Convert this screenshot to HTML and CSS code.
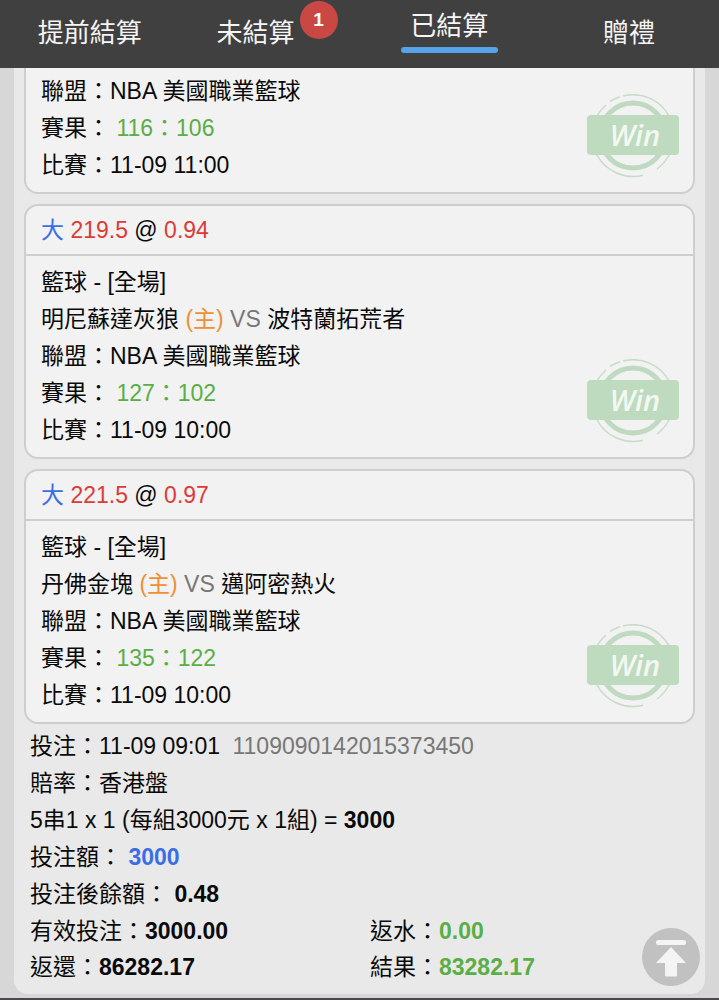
FILE: index.html
```html
<!DOCTYPE html>
<html lang="zh-Hant">
<head>
  <meta charset="UTF-8">
  <meta name="viewport" content="width=device-width, initial-scale=1.0">
  <title>已結算</title>
  <link rel="stylesheet" href="styles.css">
</head>
<body>

  <!-- stamp shared by all winning bets -->
  <svg class="defs" aria-hidden="true">
    <symbol id="win-stamp" viewBox="0 0 92 84">
      <g fill="none" stroke="#c8dbc9" stroke-width="1.5">
        <path d="M36 2A41 41 0 0 1 82 22"/>
        <path d="M82 61A41 41 0 0 1 70 75"/>
        <path d="M56 81.3A41 41 0 0 1 10 61"/>
        <path d="M10 22A41 41 0 0 1 19 11"/>
        <path d="M23 7.5A41 41 0 0 1 33 2.7"/>
      </g>
      <circle cx="46" cy="41.5" r="32.5" fill="none" stroke="#bfdac0" stroke-width="5"/>
      <rect y="21" width="92" height="40" rx="4" fill="#bedbbf"/>
    </symbol>
  </svg>

  <nav class="tabs">
    <a href="#early">提前結算</a>
    <a href="#open" class="has-badge">未結算<span class="badge">1</span></a>
    <a href="#settled" class="active">已結算</a>
    <a href="#gift">贈禮</a>
  </nav>

  <main class="panel">
    <section class="bet bet-continued">
      <div class="bet-body">
        <div>
          <p>聯盟：NBA 美國職業籃球</p>
          <p>賽果： <span class="green">116：106</span></p>
          <p>比賽：11-09 11:00</p>
        </div>
        <svg class="stamp" viewBox="0 0 92 84"><use href="#win-stamp"/><text x="48" y="52" text-anchor="middle">Win</text></svg>
      </div>
    </section>

    <section class="bet">
      <h2 class="bet-head"><span class="blue">大</span> <span class="red">219.5</span> @ <span class="red">0.94</span></h2>
      <div class="bet-body">
        <div>
          <p>籃球 - [全場]</p>
          <p>明尼蘇達灰狼 <span class="orange">(主)</span> <span class="gray">VS</span> 波特蘭拓荒者</p>
          <p>聯盟：NBA 美國職業籃球</p>
          <p>賽果： <span class="green">127：102</span></p>
          <p>比賽：11-09 10:00</p>
        </div>
        <svg class="stamp" viewBox="0 0 92 84"><use href="#win-stamp"/><text x="48" y="52" text-anchor="middle">Win</text></svg>
      </div>
    </section>

    <section class="bet">
      <h2 class="bet-head"><span class="blue">大</span> <span class="red">221.5</span> @ <span class="red">0.97</span></h2>
      <div class="bet-body">
        <div>
          <p>籃球 - [全場]</p>
          <p>丹佛金塊 <span class="orange">(主)</span> <span class="gray">VS</span> 邁阿密熱火</p>
          <p>聯盟：NBA 美國職業籃球</p>
          <p>賽果： <span class="green">135：122</span></p>
          <p>比賽：11-09 10:00</p>
        </div>
        <svg class="stamp" viewBox="0 0 92 84"><use href="#win-stamp"/><text x="48" y="52" text-anchor="middle">Win</text></svg>
      </div>
    </section>

    <section class="summary">
      <p>投注：11-09 09:01 <span class="gray ticket">1109090142015373450</span></p>
      <p>賠率：香港盤</p>
      <p>5串1 x 1 (每組3000元 x 1組) = <b>3000</b></p>
      <p>投注額： <b class="blue">3000</b></p>
      <p>投注後餘額： <b>0.48</b></p>
      <div class="totals">
        <p>有效投注：<b>3000.00</b></p>
        <p>返水：<b class="green">0.00</b></p>
        <p>返還：<b>86282.17</b></p>
        <p>結果：<b class="green">83282.17</b></p>
      </div>
    </section>
  </main>

  <button class="to-top" type="button" aria-label="回到頂部" onclick="window.scrollTo(0, 0)">
    <svg viewBox="0 0 58 58" fill="#f4f4f4">
      <rect x="14" y="12" width="30" height="5" rx="2"/>
      <path d="M29 19L44 35H35V47.500Q35 48.500 34 48.500H24Q23 48.500 23 47.500V35H14Z"/>
    </svg>
  </button>

</body>
</html>
```
FILE: styles.css
```css
* { margin: 0; padding: 0; box-sizing: border-box; }
body { font-family: "Liberation Sans", Arial, "Noto Sans CJK TC", sans-serif; font-size: 23px; line-height: 37px; color: #0a0a0a; background: #d7d7d7; border-bottom: 2px solid #4a484a; }
a { color: inherit; text-decoration: none; }

.defs { position: absolute; width: 0; height: 0; }

.tabs { display: grid; grid-template-columns: repeat(4, 1fr); height: 68px; background: #404040; color: #f5f5f5; font-size: 26px; line-height: 30px; }
.tabs a { position: relative; display: flex; flex-direction: column; justify-content: center; align-items: center; padding-bottom: 2px; }
.tabs .active { padding-bottom: 4px; }
.tabs .active::after { content: ""; width: 97px; height: 6px; margin-top: 6px; border-radius: 3px; background: #55a3ea; }
.tabs .has-badge { padding-right: 28px; }
.badge { position: absolute; top: 1px; right: 22px; width: 38px; height: 38px; border-radius: 50%; background: #c94843; color: #fff; font-size: 19px; font-weight: bold; line-height: 38px; text-align: center; }

.panel { margin: 0 14px 4px; padding: 0 10px 9px; background: #e9e9e9; border-radius: 0 0 14px 14px; }

.bet { margin-bottom: 10px; background: #f2f2f2; border: 2px solid #cecece; border-radius: 14px; }
.bet-continued { border-top: none; border-radius: 0 0 14px 14px; }
.bet-head { padding: 0 15px; font-size: 23px; font-weight: normal; line-height: 48px; border-bottom: 2px solid #cecece; }
.bet-body { display: flex; justify-content: space-between; align-items: flex-end; padding: 8px 14px 8px 15px; }
.bet-continued .bet-body { padding-top: 5px; }

.stamp { flex: none; width: 92px; height: 84px; margin-bottom: 6px; }
.stamp text { font-family: "Open Sans", sans-serif; font-size: 29px; font-weight: 600; font-style: italic; fill: #f3f8f3; }

.summary { margin-top: -6px; padding: 0 5px 0 6px; }
.ticket { margin-left: 6px; }
.totals { display: grid; grid-template-columns: 1fr 1fr; column-gap: 20px; line-height: 36px; }

.blue { color: #3b6ee6; }
.red { color: #dc3b36; }
.green { color: #5aae46; }
.orange { color: #ee8f33; }
.gray { color: #777; }

.to-top { position: fixed; right: 19px; bottom: 14px; width: 58px; height: 58px; border: none; border-radius: 50%; background: #c1c1c1; cursor: pointer; }
.to-top svg { display: block; width: 100%; height: 100%; }
```
